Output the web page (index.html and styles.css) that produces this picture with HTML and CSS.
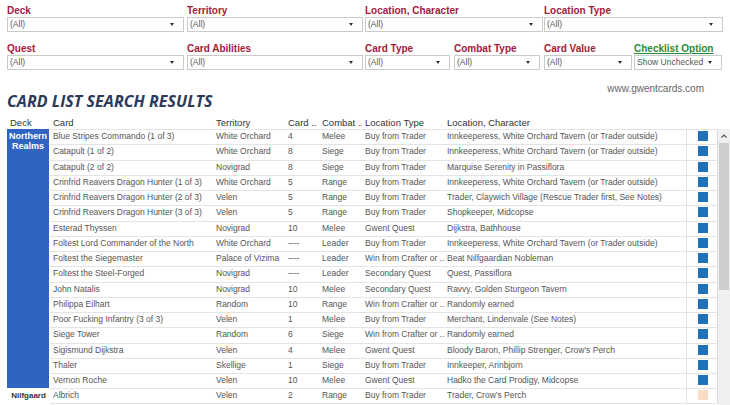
FILE: index.html
```html
<!DOCTYPE html>
<html>
<head>
<meta charset="utf-8">
<link rel="stylesheet" href="styles.css">
</head>
<body>
<div class="filters">
  <div class="frow">
    <div class="f w177"><div class="lbl">Deck</div><div class="sel">(All)<span class="arr"></span></div></div>
    <div class="f w176 ml3"><div class="lbl">Territory</div><div class="sel">(All)<span class="arr"></span></div></div>
    <div class="f w178 ml2"><div class="lbl">Location, Character</div><div class="sel">(All)<span class="arr"></span></div></div>
    <div class="f w179 ml1"><div class="lbl">Location Type</div><div class="sel">(All)<span class="arr"></span></div></div>
  </div>
  <div class="frow row2">
    <div class="f w177"><div class="lbl">Quest</div><div class="sel">(All)<span class="arr"></span></div></div>
    <div class="f w176 ml3"><div class="lbl">Card Abilities</div><div class="sel">(All)<span class="arr"></span></div></div>
    <div class="f w85 ml2"><div class="lbl">Card Type</div><div class="sel">(All)<span class="arr"></span></div></div>
    <div class="f w86 ml4"><div class="lbl">Combat Type</div><div class="sel">(All)<span class="arr"></span></div></div>
    <div class="f w88 ml4"><div class="lbl">Card Value</div><div class="sel">(All)<span class="arr"></span></div></div>
    <div class="f w88 ml2"><div class="lbl green">Checklist Option</div><div class="sel">Show Unchecked<span class="arr"></span></div></div>
  </div>
</div>

<div class="resbar">
  <h1 class="title">CARD LIST SEARCH RESULTS</h1>
  <div class="site">www.gwentcards.com</div>
</div>

<div class="thead">
  <div class="c cdeck">Deck</div>
  <div class="c ccard">Card</div>
  <div class="c cterr">Territory</div>
  <div class="c cval">Card ..</div>
  <div class="c ccomb">Combat ..</div>
  <div class="c cltype">Location Type</div>
  <div class="c cloc">Location, Character</div>
</div>

<div class="tbody">
  <div class="deckcol">
    <div class="deck blue">Northern<br>Realms</div>
    <div class="deck plain">Nilfgaard</div>
  </div>
  <div class="rows">
    <div class="row"><div class="c ccard">Blue Stripes Commando (1 of 3)</div><div class="c cterr">White Orchard</div><div class="c cval">4</div><div class="c ccomb">Melee</div><div class="c cltype">Buy from Trader</div><div class="c cloc">Innkeeperess, White Orchard Tavern (or Trader outside)</div><div class="chk"><span class="sq"></span></div></div>
    <div class="row"><div class="c ccard">Catapult (1 of 2)</div><div class="c cterr">White Orchard</div><div class="c cval">8</div><div class="c ccomb">Siege</div><div class="c cltype">Buy from Trader</div><div class="c cloc">Innkeeperess, White Orchard Tavern (or Trader outside)</div><div class="chk"><span class="sq"></span></div></div>
    <div class="row"><div class="c ccard">Catapult (2 of 2)</div><div class="c cterr">Novigrad</div><div class="c cval">8</div><div class="c ccomb">Siege</div><div class="c cltype">Buy from Trader</div><div class="c cloc">Marquise Serenity in Passiflora</div><div class="chk"><span class="sq"></span></div></div>
    <div class="row"><div class="c ccard">Crinfrid Reavers Dragon Hunter (1 of 3)</div><div class="c cterr">White Orchard</div><div class="c cval">5</div><div class="c ccomb">Range</div><div class="c cltype">Buy from Trader</div><div class="c cloc">Innkeeperess, White Orchard Tavern (or Trader outside)</div><div class="chk"><span class="sq"></span></div></div>
    <div class="row"><div class="c ccard">Crinfrid Reavers Dragon Hunter (2 of 3)</div><div class="c cterr">Velen</div><div class="c cval">5</div><div class="c ccomb">Range</div><div class="c cltype">Buy from Trader</div><div class="c cloc">Trader, Claywich Village (Rescue Trader first, See Notes)</div><div class="chk"><span class="sq"></span></div></div>
    <div class="row"><div class="c ccard">Crinfrid Reavers Dragon Hunter (3 of 3)</div><div class="c cterr">Velen</div><div class="c cval">5</div><div class="c ccomb">Range</div><div class="c cltype">Buy from Trader</div><div class="c cloc">Shopkeeper, Midcopse</div><div class="chk"><span class="sq"></span></div></div>
    <div class="row"><div class="c ccard">Esterad Thyssen</div><div class="c cterr">Novigrad</div><div class="c cval">10</div><div class="c ccomb">Melee</div><div class="c cltype">Gwent Quest</div><div class="c cloc">Dijkstra, Bathhouse</div><div class="chk"><span class="sq"></span></div></div>
    <div class="row"><div class="c ccard">Foltest Lord Commander of the North</div><div class="c cterr">White Orchard</div><div class="c cval">----</div><div class="c ccomb">Leader</div><div class="c cltype">Buy from Trader</div><div class="c cloc">Innkeeperess, White Orchard Tavern (or Trader outside)</div><div class="chk"><span class="sq"></span></div></div>
    <div class="row"><div class="c ccard">Foltest the Siegemaster</div><div class="c cterr">Palace of Vizima</div><div class="c cval">----</div><div class="c ccomb">Leader</div><div class="c cltype">Win from Crafter or ..</div><div class="c cloc">Beat Nilfgaardian Nobleman</div><div class="chk"><span class="sq"></span></div></div>
    <div class="row"><div class="c ccard">Foltest the Steel-Forged</div><div class="c cterr">Novigrad</div><div class="c cval">----</div><div class="c ccomb">Leader</div><div class="c cltype">Secondary Quest</div><div class="c cloc">Quest, Passiflora</div><div class="chk"><span class="sq"></span></div></div>
    <div class="row"><div class="c ccard">John Natalis</div><div class="c cterr">Novigrad</div><div class="c cval">10</div><div class="c ccomb">Melee</div><div class="c cltype">Secondary Quest</div><div class="c cloc">Ravvy, Golden Sturgeon Tavern</div><div class="chk"><span class="sq"></span></div></div>
    <div class="row"><div class="c ccard">Philippa Eilhart</div><div class="c cterr">Random</div><div class="c cval">10</div><div class="c ccomb">Range</div><div class="c cltype">Win from Crafter or ..</div><div class="c cloc">Randomly earned</div><div class="chk"><span class="sq"></span></div></div>
    <div class="row"><div class="c ccard">Poor Fucking Infantry (3 of 3)</div><div class="c cterr">Velen</div><div class="c cval">1</div><div class="c ccomb">Melee</div><div class="c cltype">Buy from Trader</div><div class="c cloc">Merchant, Lindenvale (See Notes)</div><div class="chk"><span class="sq"></span></div></div>
    <div class="row"><div class="c ccard">Siege Tower</div><div class="c cterr">Random</div><div class="c cval">6</div><div class="c ccomb">Siege</div><div class="c cltype">Win from Crafter or ..</div><div class="c cloc">Randomly earned</div><div class="chk"><span class="sq"></span></div></div>
    <div class="row"><div class="c ccard">Sigismund Dijkstra</div><div class="c cterr">Velen</div><div class="c cval">4</div><div class="c ccomb">Melee</div><div class="c cltype">Gwent Quest</div><div class="c cloc">Bloody Baron, Phillip Strenger, Crow's Perch</div><div class="chk"><span class="sq"></span></div></div>
    <div class="row"><div class="c ccard">Thaler</div><div class="c cterr">Skellige</div><div class="c cval">1</div><div class="c ccomb">Siege</div><div class="c cltype">Buy from Trader</div><div class="c cloc">Innkeeper, Arinbjorn</div><div class="chk"><span class="sq"></span></div></div>
    <div class="row"><div class="c ccard">Vernon Roche</div><div class="c cterr">Velen</div><div class="c cval">10</div><div class="c ccomb">Melee</div><div class="c cltype">Gwent Quest</div><div class="c cloc">Hadko the Card Prodigy, Midcopse</div><div class="chk"><span class="sq"></span></div></div>
    <div class="row last"><div class="c ccard">Albrich</div><div class="c cterr">Velen</div><div class="c cval">2</div><div class="c ccomb">Range</div><div class="c cltype">Buy from Trader</div><div class="c cloc">Trader, Crow's Perch</div><div class="chk"><span class="sq peach"></span></div></div>
  </div>
  <div class="scroll">
    <div class="up"><svg width="6" height="4" viewBox="0 0 6 4"><polyline points="0.5,3.5 3,1 5.5,3.5" fill="none" stroke="#555" stroke-width="1.2"/></svg></div>
    <div class="thumb"></div>
  </div>
</div>
</body>
</html>
```
FILE: styles.css
```css
html, body { margin: 0; padding: 0; background: #fff; }
body {
  width: 730px; height: 405px; overflow: hidden;
  font-family: "Liberation Sans", Arial, sans-serif;
}
.filters { padding: 4px 0 0 7px; }
.frow { display: flex; }
.row2 { margin-top: 10px; }
.f { display: flex; flex-direction: column; }
.w177 { width: 177px; } .w176 { width: 176px; } .w178 { width: 178px; } .w179 { width: 179px; }
.w85 { width: 85px; } .w86 { width: 86px; } .w88 { width: 88px; }
.ml1 { margin-left: 1px; } .ml2 { margin-left: 2px; } .ml3 { margin-left: 3px; } .ml4 { margin-left: 4px; }
.lbl {
  height: 13px; line-height: 13px;
  font-size: 10px; font-weight: bold; color: #a3203a;
  white-space: nowrap;
}
.lbl.green { color: #2e8b3a; text-decoration: underline; }
.sel {
  box-sizing: border-box; height: 15px;
  border: 1px solid #cacaca; background: #fff;
  font-size: 8.5px; line-height: 13px; color: #555;
  padding-left: 2px; position: relative; white-space: nowrap;
}
.arr {
  position: absolute; right: 9px; top: 5px;
  width: 0; height: 0;
  border-left: 2.5px solid transparent; border-right: 2.5px solid transparent;
  border-top: 3px solid #333;
}
.resbar {
  display: flex; justify-content: space-between; align-items: flex-start;
  margin-top: 13px; height: 28px;
}
.title {
  margin: 8px 0 0 7px; padding: 0;
  font-family: "Open Sans", "Liberation Sans", sans-serif;
  font-style: italic; font-weight: 700; font-size: 16px; line-height: 20px;
  color: #2c3a5b; letter-spacing: 0.05px;
}
.site {
  margin-right: 26px; font-size: 10px; line-height: 12px; color: #666;
}
.thead {
  display: flex; margin-left: 7px; height: 13px; margin-top: 5px;
  font-size: 9.5px; line-height: 14px; color: #333;
}
.thead .cdeck { width: 43px; padding-left: 3px; }
.c { box-sizing: border-box; padding-left: 3px; white-space: nowrap; overflow: hidden; }
.ccard { width: 163px; }
.cterr { width: 72px; }
.cval { width: 34px; }
.ccomb { width: 43px; }
.cltype { width: 82px; }
.cloc { width: 242px; }
.tbody { display: flex; margin-left: 7px; height: 276px; }
.deckcol { width: 43px; display: flex; flex-direction: column; }
.deck {
  box-sizing: border-box; text-align: center;
  font-size: 9px; font-weight: bold; line-height: 9.5px;
}
.blue {
  height: 259px; width: 42px; background: #2f65c0; color: #fff;
  padding-top: 3px;
}
.plain { height: 15.25px; line-height: 15px; color: #333; font-size: 8px; }
.rows { width: 668px; }
.row {
  display: flex; box-sizing: border-box; height: 15.25px;
  border-top: 1px solid #e4e4e4;
  font-size: 8.5px; line-height: 13px; color: #555;
}
.row.last { border-bottom: 1px solid #e4e4e4; height: 16px; }
.chk {
  width: 32px; box-sizing: border-box;
  border-left: 1px solid #e2e2e2; border-right: 1px solid #dcdcdc;
  padding: 1px 0 0 11px;
}
.sq { display: block; width: 10px; height: 10px; background: #1f71b8; }
.sq.peach { background: #f9dcc5; }
.scroll { width: 12px; background: #f0f0f0; position: relative; }
.up { height: 14px; display: flex; justify-content: center; align-items: center; }
.up svg { display: block; }
.thumb { margin-left: 1px; width: 10px; height: 147px; background: #cdcdcd; }
```
